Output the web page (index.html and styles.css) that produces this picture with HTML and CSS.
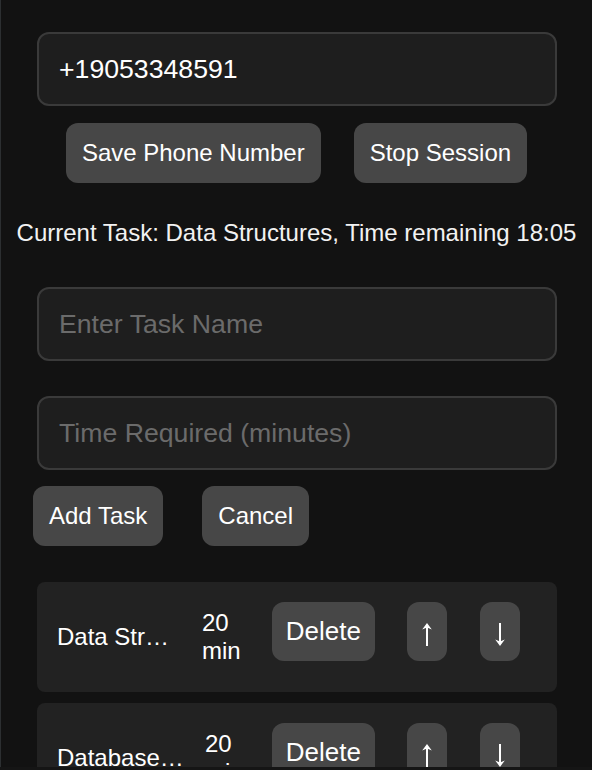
FILE: index.html
```html
<!DOCTYPE html>
<html lang="en">
<head>
<meta charset="utf-8">
<title>Study Session</title>
<link rel="stylesheet" href="styles.css">
</head>
<body>
<div class="app">
  <input class="field" type="text" value="+19053348591">
  <div class="btn-row btn-row--center">
    <button class="btn">Save Phone Number</button>
    <button class="btn">Stop Session</button>
  </div>
  <p class="status">Current Task: Data Structures, Time remaining 18:05</p>
  <input class="field field--task" type="text" placeholder="Enter Task Name">
  <input class="field field--time" type="text" placeholder="Time Required (minutes)">
  <div class="btn-row btn-row--left">
    <button class="btn">Add Task</button>
    <button class="btn">Cancel</button>
  </div>
  <ul class="task-list">
    <li class="task">
      <span class="task-name">Data Structures</span>
      <span class="task-time">20 min</span>
      <div class="task-actions">
        <button class="btn btn--card">Delete</button>
        <button class="btn btn--card btn--arrow" aria-label="Move up"><svg width="12" height="31" viewBox="0 0 12 31"><rect x="5" y="10" width="2" height="20" fill="#fff"/><polygon points="6,7 10.8,13.6 6,11.6 1.2,13.6" fill="#fff"/></svg></button>
        <button class="btn btn--card btn--arrow" aria-label="Move down"><svg width="12" height="31" viewBox="0 0 12 31"><rect x="5" y="7" width="2" height="20" fill="#fff"/><polygon points="6,30 10.8,23.4 6,25.4 1.2,23.4" fill="#fff"/></svg></button>
      </div>
    </li>
    <li class="task">
      <span class="task-name task-name--wide">Database Systems</span>
      <span class="task-time">20 min</span>
      <div class="task-actions">
        <button class="btn btn--card">Delete</button>
        <button class="btn btn--card btn--arrow" aria-label="Move up"><svg width="12" height="31" viewBox="0 0 12 31"><rect x="5" y="10" width="2" height="20" fill="#fff"/><polygon points="6,7 10.8,13.6 6,11.6 1.2,13.6" fill="#fff"/></svg></button>
        <button class="btn btn--card btn--arrow" aria-label="Move down"><svg width="12" height="31" viewBox="0 0 12 31"><rect x="5" y="7" width="2" height="20" fill="#fff"/><polygon points="6,30 10.8,23.4 6,25.4 1.2,23.4" fill="#fff"/></svg></button>
      </div>
    </li>
  </ul>
</div>
</body>
</html>
```
FILE: styles.css
```css
* {
  box-sizing: border-box;
}

html, body {
  margin: 0;
  padding: 0;
  background: #151515;
}

body {
  font-family: "Liberation Sans", Arial, sans-serif;
  color: #ffffff;
}

.app {
  height: 767px;
  overflow: hidden;
  background: #121212;
  border-left: 1px solid #2c2f31;
  padding-top: 32px;
  display: flex;
  flex-direction: column;
}

.field {
  display: block;
  width: 520px;
  height: 74px;
  margin: 0 0 0 36px;
  padding: 20px;
  border: 2px solid #3a3a3a;
  border-radius: 12px;
  background: #1e1e1e;
  color: #ffffff;
  font-family: "Liberation Sans", Arial, sans-serif;
  font-size: 26.67px;
  line-height: 30px;
  outline: none;
  flex: none;
}

.field::placeholder {
  color: #6b6b6b;
}

.field--task {
  margin-top: 40px;
}

.field--time {
  margin-top: 35px;
}

.btn-row {
  display: flex;
  flex: none;
}

.btn-row--center {
  margin-top: 17px;
  justify-content: center;
  gap: 33px;
}

.btn-row--left {
  margin-top: 16px;
  padding-left: 32px;
  gap: 39px;
}

.btn {
  border: none;
  border-radius: 12px;
  background: #474747;
  color: #ffffff;
  font-family: "Liberation Sans", Arial, sans-serif;
  font-size: 24px;
  line-height: 28px;
  padding: 16px;
  margin: 0;
  cursor: pointer;
}

.status {
  margin: 36px 0 0;
  text-align: center;
  font-size: 24px;
  line-height: 28px;
  color: #f2f2f2;
  flex: none;
}

.task-list {
  list-style: none;
  margin: 36px 0 0 36px;
  padding: 0;
  width: 520px;
  display: flex;
  flex-direction: column;
  gap: 11px;
  flex: none;
}

.task {
  display: flex;
  align-items: center;
  height: 110px;
  padding: 20px 37px 20px 20px;
  background: #222222;
  border-radius: 8px;
  font-size: 24px;
}

.task-name {
  width: 125px;
  flex: none;
  white-space: nowrap;
  overflow: hidden;
  text-overflow: ellipsis;
  line-height: 28px;
}

.task-name--wide {
  width: 128px;
}

.task-time {
  flex: 1;
  min-width: 0;
  margin-left: 20px;
  line-height: 28px;
}

.task-actions {
  display: flex;
  flex: none;
  margin-left: 20px;
  gap: 32px;
  align-self: flex-start;
}

.btn--card {
  font-size: 26px;
  line-height: 31px;
  padding: 14px;
  margin-bottom: 11px;
}

.btn--arrow {
  width: 40px;
  display: flex;
  justify-content: center;
}

.btn--arrow + .btn--arrow {
  margin-left: 1px;
}

.btn--arrow svg {
  display: block;
}
```
